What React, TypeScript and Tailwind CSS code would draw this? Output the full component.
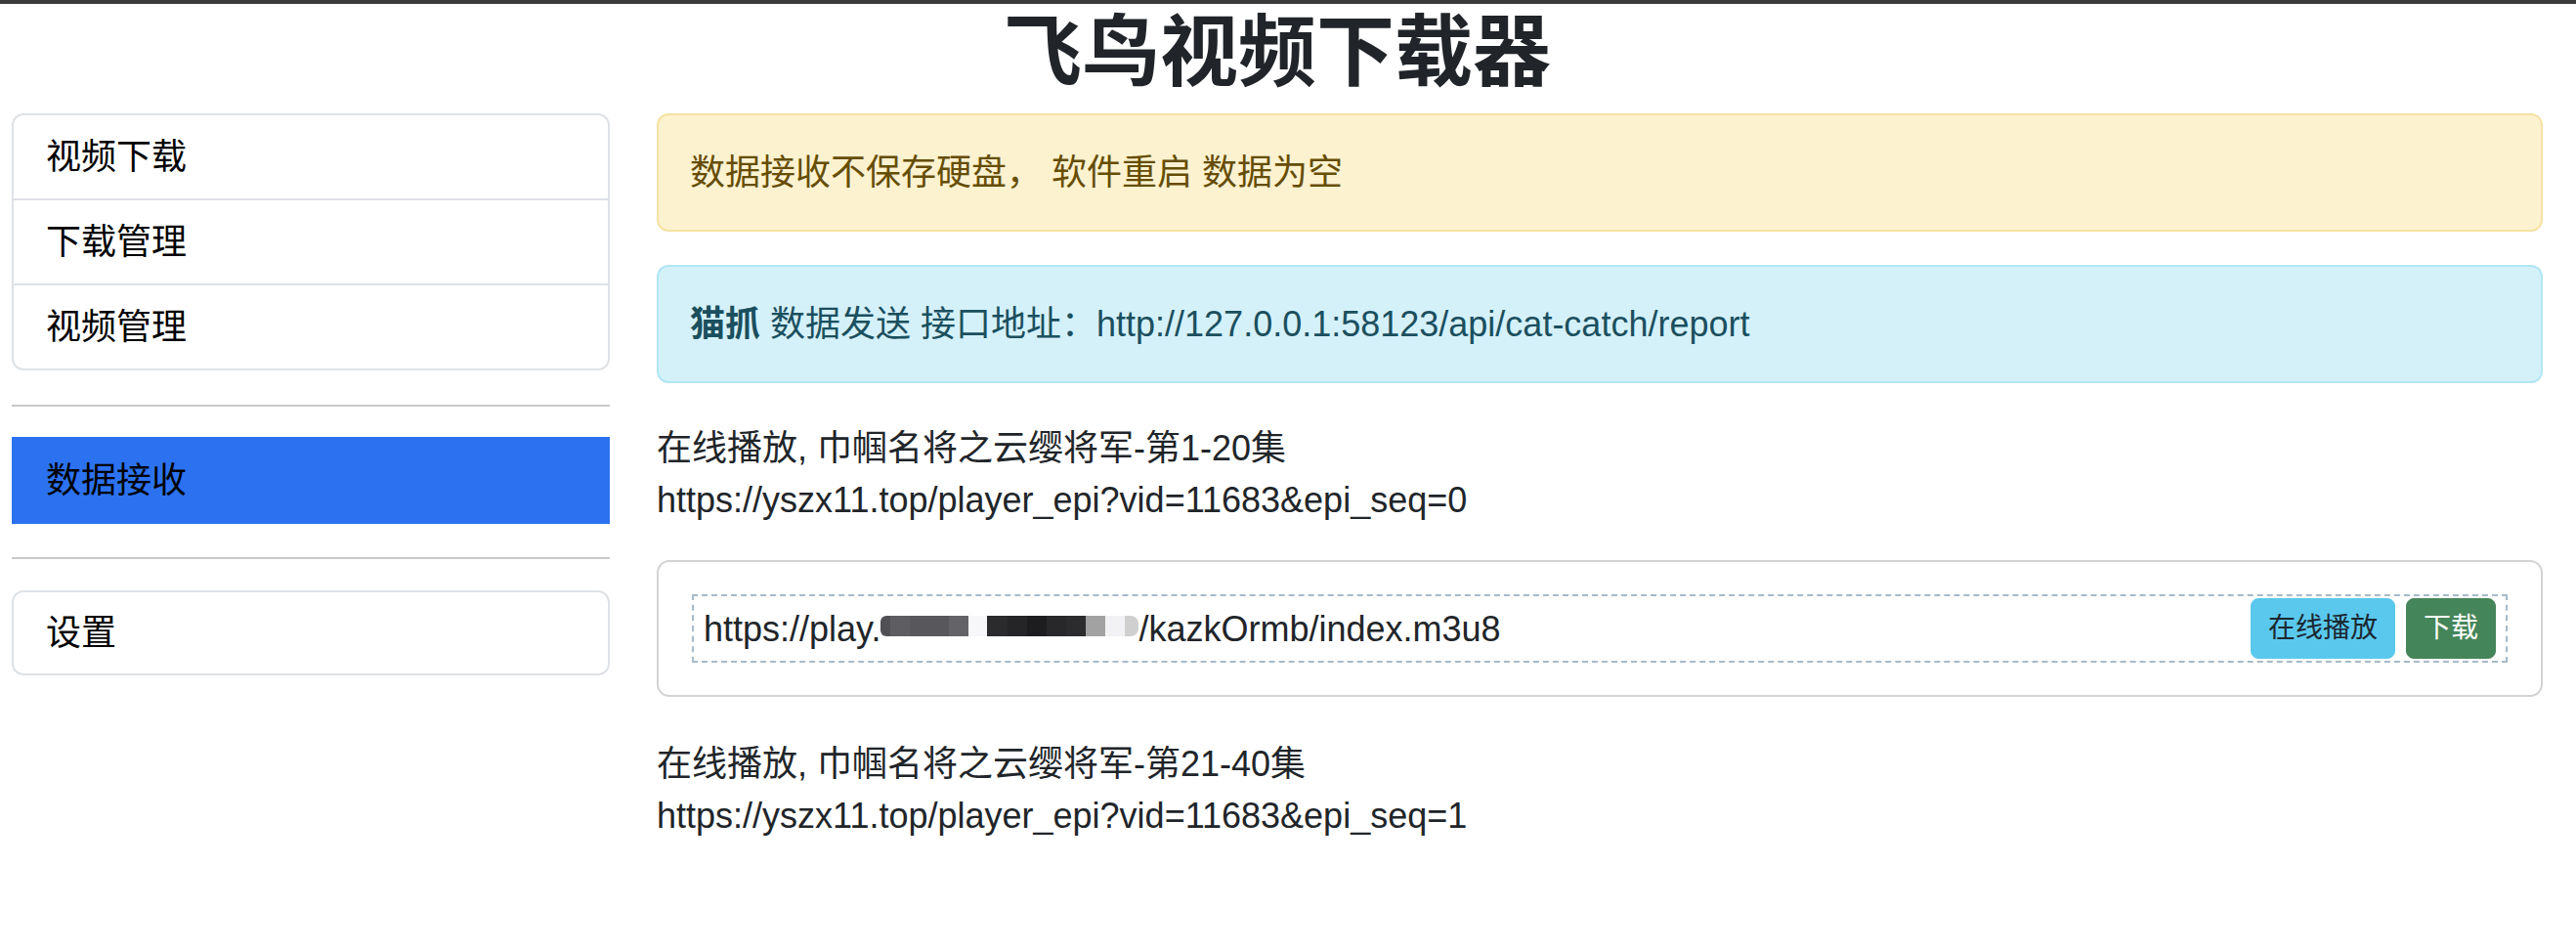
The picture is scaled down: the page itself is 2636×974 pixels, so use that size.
import React from "react";

const font = "font-['Liberation_Sans','Noto_Sans_CJK_SC',sans-serif]";

function Mosaic() {
  const blocks: { w: string; c: string }[] = [
    { w: "w-[10px]", c: "bg-[#505055] rounded-l-[6px]" },
    { w: "w-[20px]", c: "bg-[#5e5e62]" },
    { w: "w-[40px]", c: "bg-[#58585c]" },
    { w: "w-[20px]", c: "bg-[#646468]" },
    { w: "w-[19px]", c: "bg-[#f7f7f9]" },
    { w: "w-[21px]", c: "bg-[#2b2b2d]" },
    { w: "w-[20px]", c: "bg-[#252527]" },
    { w: "w-[20px]", c: "bg-[#1d1d1f]" },
    { w: "w-[20px]", c: "bg-[#28282a]" },
    { w: "w-[20px]", c: "bg-[#2c2c2e]" },
    { w: "w-[20px]", c: "bg-[#a2a2a2]" },
    { w: "w-[20px]", c: "bg-[#f2f2f4]" },
    { w: "w-[14px]", c: "bg-[#cfcfcf] rounded-r-[8px]" },
  ];
  return (
    <div className="flex h-[21px] mb-[5px] shrink-0">
      {blocks.map((b, i) => (
        <div key={i} className={`${b.w} ${b.c} h-full`} />
      ))}
    </div>
  );
}

function Entry({ title, url }: { title: string; url: string }) {
  return (
    <div className="text-[36px] leading-[53px] text-[#212529]">
      <div>{title}</div>
      <div>{url}</div>
    </div>
  );
}

export default function App() {
  return (
    <div className={`${font} bg-white min-h-[974px] w-[2636px]`}>
      <div className="h-[4px] w-full bg-[#3a3a3a]" />
      <h1 className="text-center pr-[22px] text-[80px] font-bold leading-[100px] text-[#212529]">
        飞鸟视频下载器
      </h1>
      <div className="mt-[12px] flex pl-[12px] pr-[34px] gap-[48px]">
        {/* Sidebar */}
        <aside className="w-[612px] shrink-0 text-[36px] leading-[53px] text-black">
          <div className="rounded-[12px] border-2 border-[#dee2e6] overflow-hidden">
            <div className="px-[33px] py-[16px]">视频下载</div>
            <div className="px-[33px] py-[16px] border-t-2 border-[#dee2e6]">下载管理</div>
            <div className="px-[33px] py-[16px] border-t-2 border-[#dee2e6]">视频管理</div>
          </div>
          <div className="mt-[35px] h-[2px] bg-[#c9c9c9]" />
          <div className="mt-[31px] bg-[#2c72f0] px-[35px] py-[18px]">数据接收</div>
          <div className="mt-[34px] h-[2px] bg-[#c9c9c9]" />
          <div className="mt-[32px] rounded-[12px] border-2 border-[#dee2e6] px-[33px] py-[15px]">
            设置
          </div>
        </aside>

        {/* Main */}
        <main className="flex-1 min-w-0">
          <div className="rounded-[12px] border-2 border-[#f6e2a2] bg-[#fcf2d0] px-[32px] py-[32px] text-[36px] leading-[53px] text-[#664d03]">
            数据接收不保存硬盘， 软件重启 数据为空
          </div>
          <div className="mt-[34px] rounded-[12px] border-2 border-[#b3e5f4] bg-[#d4f1fa] px-[32px] py-[32px] text-[36px] leading-[53px] text-[#1b4f5e]">
            <span className="font-bold">猫抓</span> 数据发送 接口地址：http://127.0.0.1:58123/api/cat-catch/report
          </div>

          <div className="mt-[40px]">
            <Entry
              title="在线播放, 巾帼名将之云缨将军-第1-20集"
              url="https://yszx11.top/player_epi?vid=11683&epi_seq=0"
            />
          </div>

          <div className="mt-[35px] rounded-[13px] border-2 border-[#d3d3d3] px-[34px] py-[33px]">
            <div className="flex items-center justify-between border-2 border-dashed border-[#a6bac9] px-[10px] py-[2px]">
              <div className="flex items-center text-[36px] leading-[53px] text-[#212529] whitespace-nowrap">
                <span>https://play.</span>
                <Mosaic />
                <span>/kazkOrmb/index.m3u8</span>
              </div>
              <div className="flex gap-[11px]">
                <button className="rounded-[8px] border border-[#5ac8ed] bg-[#5ac8ed] px-[17px] py-[9px] text-[28px] leading-[42px] text-[#1b2731]">
                  在线播放
                </button>
                <button className="rounded-[8px] border border-[#45855a] bg-[#45855a] px-[17px] py-[9px] text-[28px] leading-[42px] text-white">
                  下载
                </button>
              </div>
            </div>
          </div>

          <div className="mt-[42px]">
            <Entry
              title="在线播放, 巾帼名将之云缨将军-第21-40集"
              url="https://yszx11.top/player_epi?vid=11683&epi_seq=1"
            />
          </div>
        </main>
      </div>
    </div>
  );
}
